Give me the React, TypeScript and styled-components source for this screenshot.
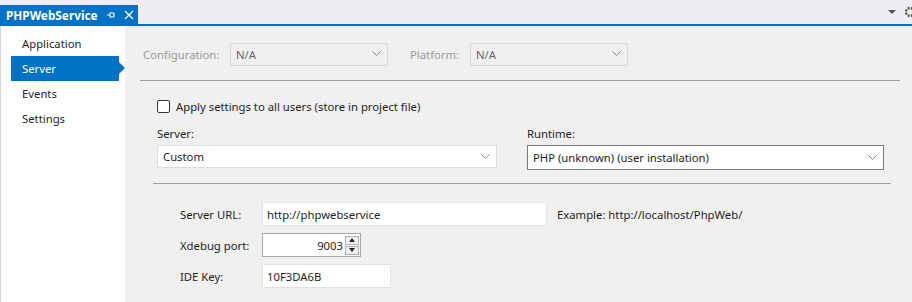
import styled, { createGlobalStyle } from "styled-components";

const GlobalStyle = createGlobalStyle`
  body {
    margin: 0;
    font-family: "Noto Sans", "Open Sans", sans-serif;
    font-size: 11.3px;
    color: #1e1e1e;
    background: #f0f0f0;
  }
  * { box-sizing: border-box; }
`;

const Page = styled.div`
  width: 912px;
  height: 302px;
  display: flex;
  flex-direction: column;
  overflow: hidden;
`;

const TabStrip = styled.div`
  height: 26px;
  flex: none;
  display: flex;
  align-items: flex-end;
  justify-content: space-between;
  background: #eeeef2;
  border-bottom: 2px solid #0072c6;
`;

const Tab = styled.div`
  height: 19px;
  width: 138px;
  display: flex;
  align-items: center;
  padding-left: 6px;
  background: #0072c6;
  color: #fff;
  font-weight: 700;
  font-size: 11.8px;
`;

const TabName = styled.span`
  flex: 1;
`;

const TabIcon = styled.span`
  display: flex;
  width: 18px;
  justify-content: center;
`;

const StripTools = styled.div`
  display: flex;
  align-items: center;
  gap: 8px;
  height: 24px;
  margin-right: -4px;
`;

const Main = styled.div`
  flex: 1;
  display: flex;
`;

const Sidebar = styled.nav`
  width: 125px;
  flex: none;
  background: #fff;
  border-left: 1px solid #d6d6d6;
  padding: 5px 0 0 10px;
  display: flex;
  flex-direction: column;
`;

const NavItem = styled.div<{ $active?: boolean }>`
  position: relative;
  width: 108px;
  height: 25px;
  display: flex;
  align-items: center;
  padding-left: 11px;
  background: ${({ $active }) => ($active ? "#0072c6" : "transparent")};
  color: ${({ $active }) => ($active ? "#fff" : "#1e1e1e")};

  &::after {
    content: "";
    display: ${({ $active }) => ($active ? "block" : "none")};
    position: absolute;
    right: -6px;
    top: 6px;
    border-left: 6px solid #0072c6;
    border-top: 6px solid transparent;
    border-bottom: 6px solid transparent;
  }
`;

const Content = styled.div`
  flex: 1;
  padding: 17px 12px 0 15px;
  display: flex;
  flex-direction: column;
`;

const ConfigRow = styled.div`
  display: flex;
  align-items: center;
  padding-left: 3px;
  height: 22px;
`;

const DimLabel = styled.span<{ $w: number; $gap?: number }>`
  width: ${({ $w }) => $w}px;
  margin-left: ${({ $gap }) => $gap ?? 0}px;
  color: #9a9a9a;
`;

const Select = styled.div<{ $w: number; $h?: number; $disabled?: boolean; $dark?: boolean }>`
  width: ${({ $w }) => $w}px;
  height: ${({ $h }) => $h ?? 23}px;
  display: flex;
  align-items: center;
  justify-content: space-between;
  padding: 0 6px 0 5px;
  background: ${({ $disabled }) => ($disabled ? "#f0f0f0" : "#fff")};
  border: 1px solid
    ${({ $disabled, $dark }) => ($dark ? "#7a7a7a" : $disabled ? "#d9d9d9" : "#dcdcdc")};
  color: ${({ $disabled }) => ($disabled ? "#6a5f6a" : "#1e1e1e")};
`;

const Separator = styled.div<{ $top: number; $left?: number; $right?: number }>`
  height: 1px;
  background: #a0a0a0;
  margin: ${({ $top }) => $top}px ${({ $right }) => $right ?? 0}px 0
    ${({ $left }) => $left ?? 0}px;
`;

const Section = styled.div`
  padding-left: 17px;
`;

const CheckRow = styled.label`
  display: flex;
  align-items: center;
  gap: 6px;
  margin-top: 18px;
  height: 14px;
`;

const CheckBox = styled.span`
  width: 13px;
  height: 13px;
  border: 1px solid #333;
  border-radius: 2px;
  background: #fff;
`;

const Columns = styled.div`
  display: flex;
  gap: 30px;
  margin-top: 13px;
`;

const Field = styled.div`
  display: flex;
  flex-direction: column;
  gap: 4px;
`;

const Details = styled.div`
  padding: 18px 0 0 40px;
  display: grid;
  grid-template-columns: 82px auto 1fr;
  row-gap: 7px;
  align-items: center;
`;

const Label = styled.span``;

const TextBox = styled.div<{ $w: number; $border?: string; $right?: boolean }>`
  width: ${({ $w }) => $w}px;
  height: 24px;
  display: flex;
  align-items: center;
  justify-content: ${({ $right }) => ($right ? "flex-end" : "flex-start")};
  padding: 0 4px;
  background: #fff;
  border: 1px solid ${({ $border }) => $border ?? "#e3e3e3"};
`;

const Hint = styled.span`
  padding-left: 10px;
`;

const SpinBox = styled(TextBox)`
  padding: 0 1px 0 4px;
  gap: 1px;
`;

const Spinner = styled.div`
  display: flex;
  flex-direction: column;
  gap: 1px;
  margin-left: 1px;
`;

const SpinButton = styled.div`
  width: 14px;
  height: 9px;
  border: 1px solid #adadad;
  background: #f2f2f2;
  display: flex;
  align-items: center;
  justify-content: center;
`;

const Chevron = () => (
  <svg width="9" height="6" viewBox="0 0 9 6">
    <path d="M0.5 0.5 L4.5 4.5 L8.5 0.5" fill="none" stroke="#888" strokeWidth="1" />
  </svg>
);

const Triangle = ({ up }: { up?: boolean }) => (
  <svg width="6" height="4" viewBox="0 0 6 4">
    <path d={up ? "M0 4 L3 0 L6 4 Z" : "M0 0 L6 0 L3 4 Z"} fill="#222" />
  </svg>
);

export default function App() {
  return (
    <Page>
      <GlobalStyle />
      <TabStrip>
        <Tab>
          <TabName>PHPWebService</TabName>
          <TabIcon>
            <svg width="10" height="10" viewBox="0 0 10 10">
              <path d="M1 5 H4 M4 2.5 V7.5 M4 3 H8 V7 H4 M8 5 H7" fill="none" stroke="#fff" strokeWidth="1" />
            </svg>
          </TabIcon>
          <TabIcon>
            <svg width="10" height="10" viewBox="0 0 10 10">
              <path d="M1 1 L9 9 M9 1 L1 9" stroke="#fff" strokeWidth="1.3" />
            </svg>
          </TabIcon>
        </Tab>
        <StripTools>
          <svg width="8" height="4" viewBox="0 0 8 4">
            <path d="M0 0 H8 L4 4 Z" fill="#555" />
          </svg>
          <svg width="12" height="12" viewBox="0 0 12 12">
            <circle cx="6" cy="6" r="4" fill="none" stroke="#555" strokeWidth="2.4" strokeDasharray="2 1.2" />
            <circle cx="6" cy="6" r="1.6" fill="#eeeef2" />
          </svg>
        </StripTools>
      </TabStrip>
      <Main>
        <Sidebar>
          <NavItem>Application</NavItem>
          <NavItem $active>Server</NavItem>
          <NavItem>Events</NavItem>
          <NavItem>Settings</NavItem>
        </Sidebar>
        <Content>
          <ConfigRow>
            <DimLabel $w={87}>Configuration:</DimLabel>
            <Select $w={158} $disabled>
              N/A <Chevron />
            </Select>
            <DimLabel $w={60} $gap={22}>Platform:</DimLabel>
            <Select $w={158} $disabled>
              N/A <Chevron />
            </Select>
          </ConfigRow>
          <Separator $top={15} />
          <Section>
            <CheckRow>
              <CheckBox />
              Apply settings to all users (store in project file)
            </CheckRow>
            <Columns>
              <Field>
                <Label>Server:</Label>
                <Select $w={340}>
                  Custom <Chevron />
                </Select>
              </Field>
              <Field>
                <Label>Runtime:</Label>
                <Select $w={357} $h={25} $dark>
                  PHP (unknown) (user installation) <Chevron />
                </Select>
              </Field>
            </Columns>
          </Section>
          <Separator $top={13} $left={13} $right={9} />
          <Details>
            <Label>Server URL:</Label>
            <TextBox $w={285}>http://phpwebservice</TextBox>
            <Hint>Example: http://localhost/PhpWeb/</Hint>
            <Label>Xdebug port:</Label>
            <SpinBox $w={99} $border="#a9a9a9" $right>
              9003
              <Spinner>
                <SpinButton>
                  <Triangle up />
                </SpinButton>
                <SpinButton>
                  <Triangle />
                </SpinButton>
              </Spinner>
            </SpinBox>
            <span />
            <Label>IDE Key:</Label>
            <TextBox $w={129}>10F3DA6B</TextBox>
            <span />
          </Details>
        </Content>
      </Main>
    </Page>
  );
}
